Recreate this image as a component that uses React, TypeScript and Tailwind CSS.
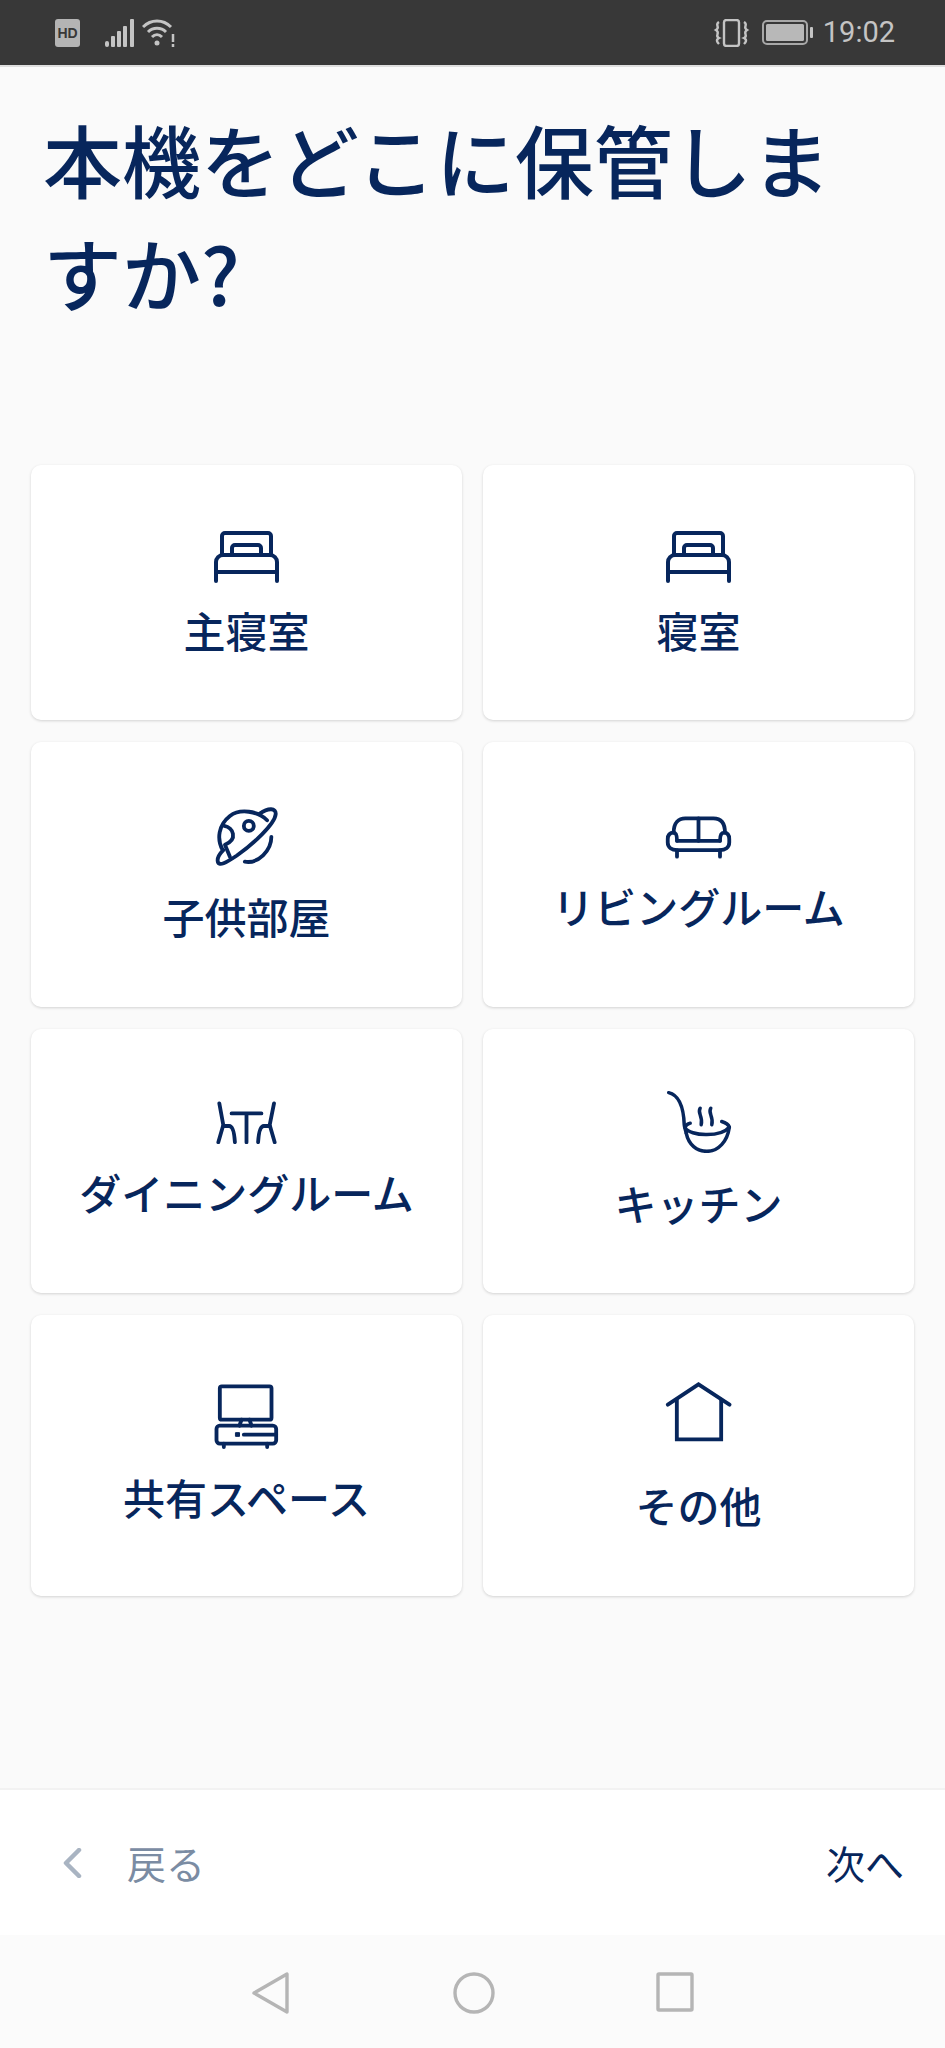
import React from 'react';

const NAVY = '#07265c';

const BedIcon = () => (
  <svg width="65" height="52" viewBox="0 0 65 52" fill="none" stroke={NAVY} strokeWidth="4" strokeLinecap="round" strokeLinejoin="round">
    <path d="M8 24V5a3 3 0 0 1 3-3h43a3 3 0 0 1 3 3v19" />
    <path d="M18 24v-7a3 3 0 0 1 3-3h23a3 3 0 0 1 3 3v7" />
    <path d="M2 50V31a7 7 0 0 1 7-7h47a7 7 0 0 1 7 7v19" />
    <path d="M2 41h61" />
  </svg>
);

const PlanetIcon = () => (
  <svg width="63" height="62" viewBox="105 75 190 187" fill="none" stroke={NAVY} strokeWidth="11.5" strokeLinecap="round" strokeLinejoin="round">
    <path d="M262 118C235 90 180 82 150 105C115 132 110 175 128 208" />
    <path d="M240 98C265 80 290 80 288 100C285 130 220 190 170 225C140 245 115 260 113 240C112 228 120 218 130 208" />
    <path d="M275 168C275 210 235 250 195 243" />
    <circle cx="207" cy="135" r="15" />
    <path d="M133 135C160 140 175 175 135 192L150 228" />
  </svg>
);

const SofaIcon = () => (
  <svg width="67" height="43" viewBox="75 75 200 130" fill="none" stroke={NAVY} strokeWidth="11.5" strokeLinecap="round" strokeLinejoin="round">
    <path d="M100 125C100 95 115 82 135 82H220C245 82 255 100 255 125" />
    <path d="M175 82V150" />
    <path d="M110 150H240" />
    <path d="M100 125C85 125 82 135 82 145V155C82 170 95 178 110 178H240C255 178 268 170 268 155V145C268 130 262 125 252 125C243 125 240 135 240 150" />
    <path d="M100 125C108 125 110 135 110 150" />
    <path d="M110 178V198M240 178V198" />
  </svg>
);

const TableIcon = () => (
  <svg width="61" height="43" viewBox="78 63 184 129" fill="none" stroke={NAVY} strokeWidth="11.5" strokeLinecap="round" strokeLinejoin="round">
    <path d="M88 70L100 135L85 187" />
    <path d="M100 138H118C128 138 133 155 135 187" />
    <path d="M125 100H215M170 100V187" />
    <path d="M253 70L240 135L255 187" />
    <path d="M240 138H222C212 138 207 155 205 187" />
  </svg>
);

const LadleIcon = () => (
  <svg width="66" height="63" viewBox="78 60 197 190" fill="none" stroke={NAVY} strokeWidth="10.5" strokeLinecap="round" strokeLinejoin="round">
    <path d="M85 68C115 75 130 110 132 165C133 175 135 178 138 190" />
    <path d="M150 160C140 163 135 168 135 175C150 198 240 205 268 172C265 163 255 158 245 155" />
    <path d="M138 190C145 225 170 245 200 245C235 245 262 215 268 172" />
    <path d="M180 115C170 130 190 140 183 165" />
    <path d="M212 115C202 130 222 140 215 165" />
  </svg>
);

const TvIcon = () => (
  <svg width="65" height="65" viewBox="76 43 194 195" fill="none" stroke={NAVY} strokeWidth="11.5" strokeLinecap="round" strokeLinejoin="round">
    <rect x="93" y="50" width="155" height="100" rx="6" />
    <path d="M158 150L152 168M182 150L188 168" />
    <rect x="83" y="168" width="179" height="54" rx="10" />
    <path d="M165 195H262" />
    <rect x="141" y="189" width="11" height="11" fill={NAVY} strokeWidth="3" />
    <path d="M105 222V232M235 222V232" />
  </svg>
);

const HouseIcon = () => (
  <svg width="67" height="60" viewBox="72 35 200 180" fill="none" stroke={NAVY} strokeWidth="11.5" strokeLinecap="round" strokeLinejoin="miter">
    <path d="M80 103L172 42L265 103" />
    <path d="M107 88V207H240V88" />
  </svg>
);

const rooms = [
  { label: '主寝室', icon: <BedIcon />, pad: 'pt-[66px]', gap: 'mt-[19px]', row: 'h-[255px]' },
  { label: '寝室', icon: <BedIcon />, pad: 'pt-[66px]', gap: 'mt-[19px]', row: 'h-[255px]' },
  { label: '子供部屋', icon: <PlanetIcon />, pad: 'pt-[64px]', gap: 'mt-[20px]', row: 'h-[265px]' },
  { label: 'リビングルーム', icon: <SofaIcon />, pad: 'pt-[74px]', gap: 'mt-[19px]', row: 'h-[265px]' },
  { label: 'ダイニングルーム', icon: <TableIcon />, pad: 'pt-[72px]', gap: 'mt-[20px]', row: 'h-[264px]' },
  { label: 'キッチン', icon: <LadleIcon />, pad: 'pt-[61px]', gap: 'mt-[22px]', row: 'h-[264px]' },
  { label: '共有スペース', icon: <TvIcon />, pad: 'pt-[69px]', gap: 'mt-[20px]', row: 'h-[281px]' },
  { label: 'その他', icon: <HouseIcon />, pad: 'pt-[67px]', gap: 'mt-[35px]', row: 'h-[281px]' },
];

const StatusBar = () => (
  <div className="h-[67px] shrink-0 bg-[#383838] border-b-2 border-[#dedede] flex items-center justify-between pl-[55px] pr-[50px]">
    <div className="flex items-center">
      <div className="w-[25px] h-[28px] rounded-[3px] bg-[#b4b4b4] flex items-center justify-center text-[#383838] text-[14px] font-bold leading-none font-['Liberation_Sans',sans-serif]">
        HD
      </div>
      <svg className="ml-[25px]" width="30" height="28" viewBox="0 0 30 28" fill="#c4c4c4">
        <rect x="0" y="22" width="4" height="6" rx="2" />
        <rect x="6" y="17" width="4" height="11" rx="1" />
        <rect x="12" y="12" width="4" height="16" rx="1" />
        <rect x="18" y="7" width="4" height="21" rx="1" />
        <rect x="25" y="0" width="4" height="28" rx="1" />
      </svg>
      <svg className="ml-[7px]" width="34" height="28" viewBox="0 0 34 28" fill="none" stroke="#c4c4c4" strokeWidth="3">
        <path d="M1 8C9 0 21 0 29 8" />
        <path d="M6 13C11 8 19 8 24 13" />
        <path d="M10 18C13 15 17 15 20 18" />
        <circle cx="15" cy="24" r="2.5" fill="#c4c4c4" stroke="none" />
        <path d="M31 15V23M31 25V28" strokeWidth="2.5" />
      </svg>
    </div>
    <div className="flex items-center">
      <svg width="37" height="28" viewBox="0 0 37 28" fill="none" stroke="#c4c4c4" strokeWidth="2.4">
        <rect x="11" y="1" width="15" height="26" rx="2.5" />
        <path d="M6 3C1 6 8 8 3 11C8 14 1 17 6 19C2 21 5 24 6 25" strokeWidth="2.4" />
        <path d="M31 3C36 6 29 8 34 11C29 14 36 17 31 19C35 21 32 24 31 25" strokeWidth="2.4" />
      </svg>
      <svg className="ml-[12px]" width="51" height="25" viewBox="0 0 51 25" fill="none">
        <rect x="1" y="1" width="44" height="23" rx="4" stroke="#a8a8a8" strokeWidth="2" />
        <rect x="4" y="4" width="38" height="17" rx="1.5" fill="#b8b8b8" />
        <rect x="48" y="7" width="3" height="11" rx="1" fill="#c4c4c4" />
      </svg>
      <span className="ml-[10px] text-[29px] leading-none text-[#c4c4c4] font-['Roboto',sans-serif]">19:02</span>
    </div>
  </div>
);

export default function App() {
  return (
    <div className="h-[2048px] w-[945px] flex flex-col bg-[#fafafa] overflow-hidden font-['Noto_Sans_CJK_JP','Noto_Sans',sans-serif]">
      <StatusBar />

      <div className="h-[1721px] shrink-0">
        <h1 className="mt-[35px] ml-[43px] w-[810px] text-[79px] leading-[113px] font-medium text-[#07265c]">
          本機をどこに保管しますか?
        </h1>

        <div className="mt-[137px] px-[31px] grid grid-cols-2 gap-x-[21px] gap-y-[22px]">
          {rooms.map(room => (
            <div
              key={room.label}
              className={`${room.row} ${room.pad} bg-white rounded-[10px] shadow-[0_1px_3px_rgba(0,0,0,0.16)] flex flex-col items-center`}
            >
              {room.icon}
              <span className={`${room.gap} text-[42px] leading-[56px] font-medium text-[#07265c] whitespace-nowrap`}>
                {room.label}
              </span>
            </div>
          ))}
        </div>
      </div>

      {/* back / next bar */}
      <div className="h-[147px] shrink-0 bg-white border-t-2 border-[#f2f2f2] flex items-center justify-between pl-[63px] pr-[41px]">
        <div className="flex items-center">
          <svg width="19" height="30" viewBox="0 0 19 30" fill="none" stroke="#a9b4c2" strokeWidth="4.5" strokeLinecap="round" strokeLinejoin="round">
            <path d="M16 2L3 15L16 28" />
          </svg>
          <span className="ml-[45px] text-[39px] leading-none text-[#7b8ca3]">戻る</span>
        </div>
        <span className="text-[39px] leading-none text-[#07265c]">次へ</span>
      </div>

      {/* android nav keys */}
      <div className="flex-1 bg-[#fbfbfb] flex items-start justify-center pt-[37px]">
        <svg width="37" height="42" viewBox="0 0 37 42" fill="none" stroke="#b5b5b5" strokeWidth="3.4" strokeLinejoin="round">
          <path d="M35 2V40L2 21Z" />
        </svg>
        <svg className="ml-[164px]" width="42" height="42" viewBox="0 0 42 42" fill="none" stroke="#b5b5b5" strokeWidth="3.4">
          <circle cx="21" cy="21" r="19" />
        </svg>
        <svg className="ml-[161px]" width="38" height="40" viewBox="0 0 38 40" fill="none" stroke="#b5b5b5" strokeWidth="3.4" strokeLinejoin="round">
          <rect x="2" y="2" width="34" height="36" rx="1" />
        </svg>
      </div>
    </div>
  );
}
